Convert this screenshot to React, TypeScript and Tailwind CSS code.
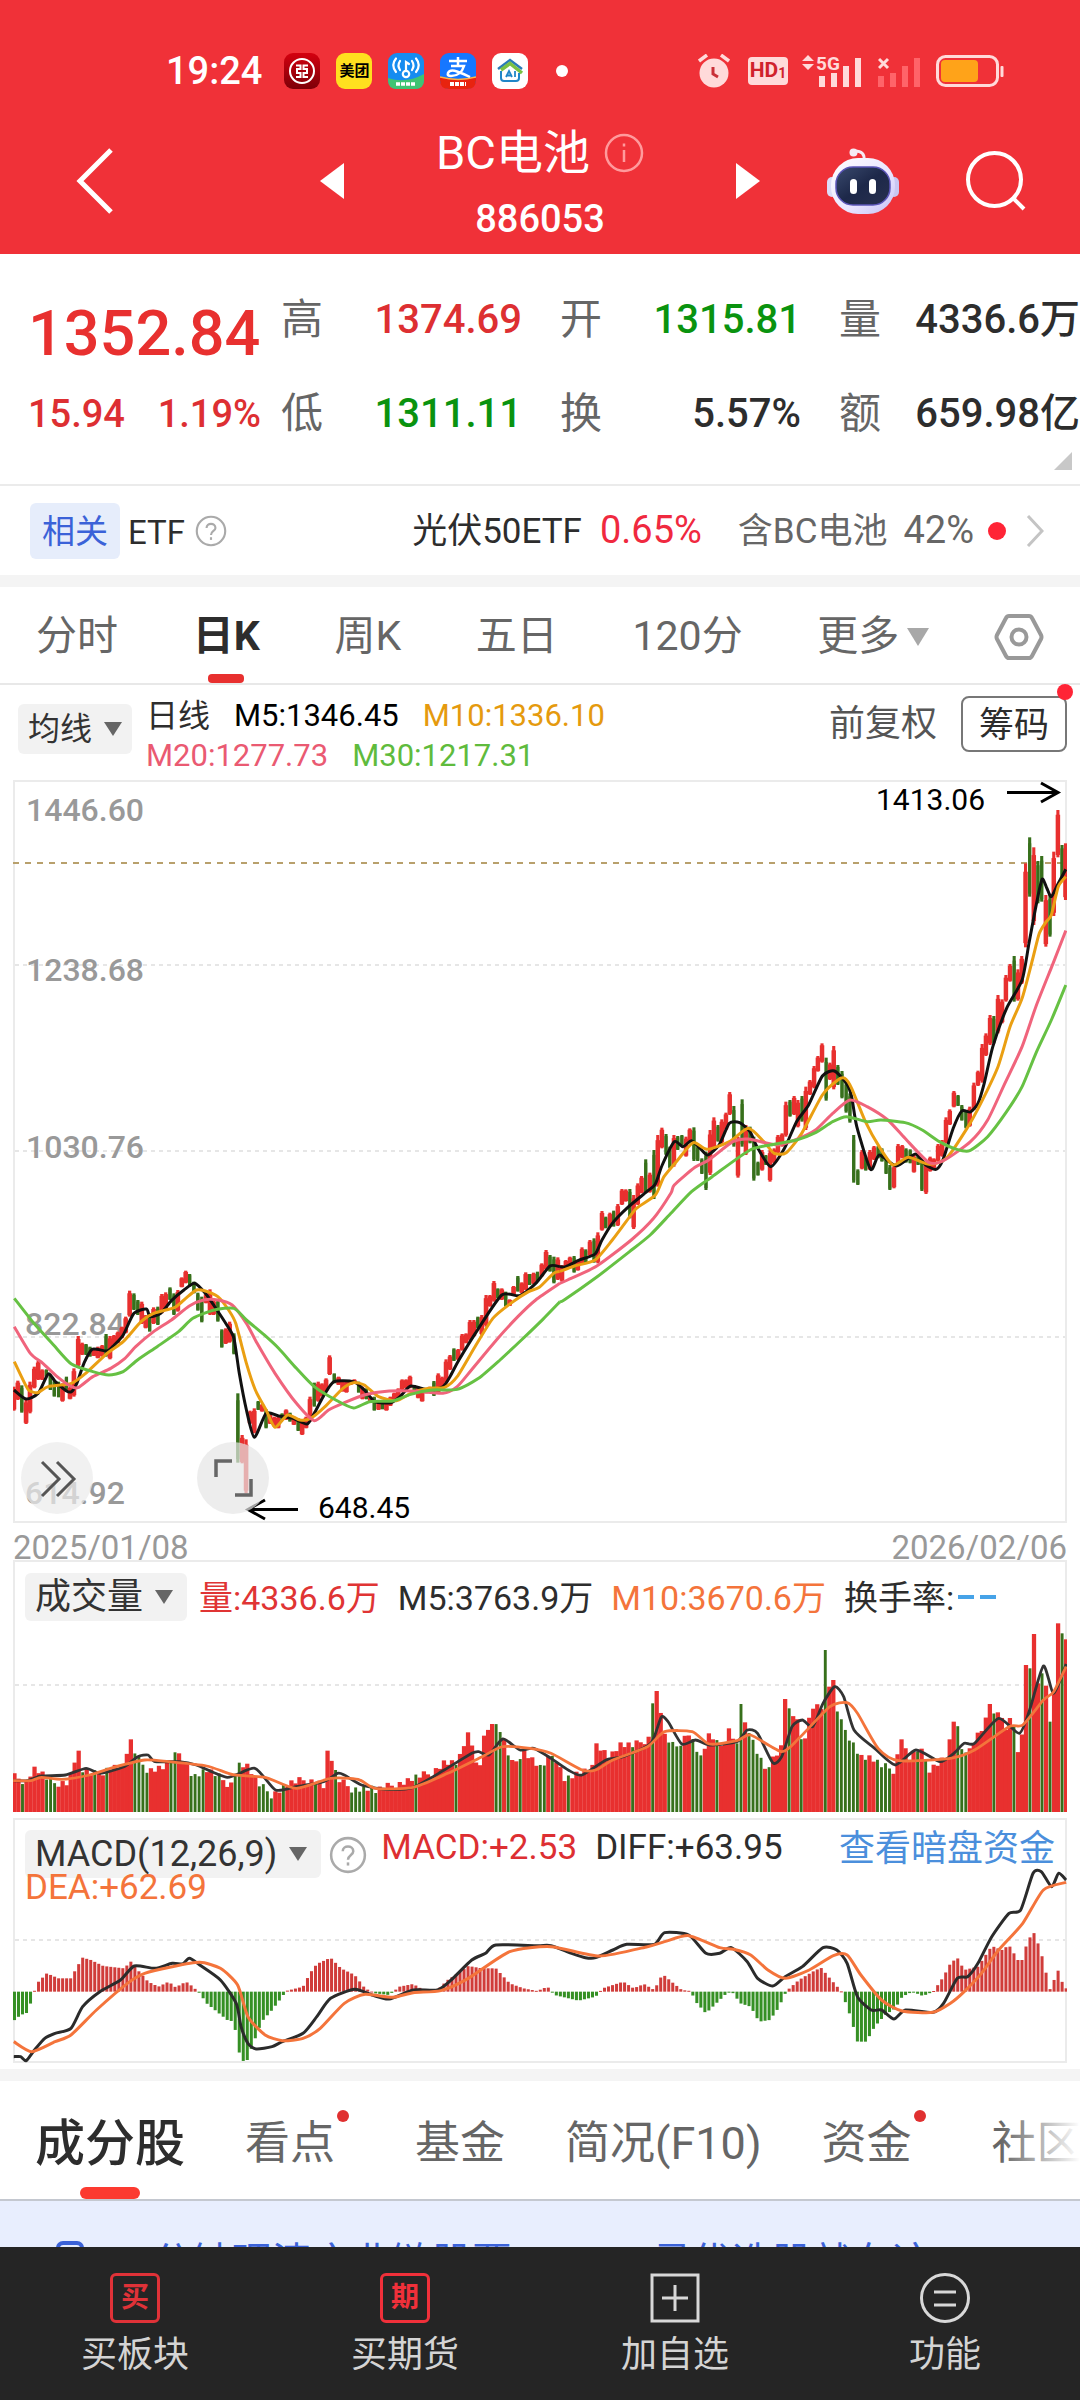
import React from "react";

type Pt = [number, number];

const parse = (s: string): Pt[] =>
  s.trim().split(/\s+/).map((p) => p.split(",").map(Number) as Pt);

/** Linear interpolation over a list of control points. */
function sample(pts: Pt[], x: number): number {
  if (x <= pts[0][0]) return pts[0][1];
  for (let i = 1; i < pts.length; i++) {
    const [x1, y1] = pts[i];
    if (x <= x1) {
      const [x0, y0] = pts[i - 1];
      return y0 + ((y1 - y0) * (x - x0)) / (x1 - x0);
    }
  }
  return pts[pts.length - 1][1];
}

/** Smooth path through the points (Catmull-Rom with a low tension). */
function curve(s: string): string {
  const p = parse(s);
  let d = `M${p[0][0]},${p[0][1]}`;
  for (let i = 0; i < p.length - 1; i++) {
    const a = p[i - 1] ?? p[i];
    const b = p[i];
    const c = p[i + 1];
    const e = p[i + 2] ?? c;
    const k = 9;
    d += `C${b[0] + (c[0] - a[0]) / k},${b[1] + (c[1] - a[1]) / k} ${c[0] - (e[0] - b[0]) / k},${c[1] - (e[1] - b[1]) / k} ${c[0]},${c[1]}`;
  }
  return d;
}

/* ---------- price data: first half and second half of the period ---------- */

const CANDLES_A =
  "r39,560,632 r50,542,600 g61,556,638 r73,600,672 r84,545,640 r96,500,565 r107,482,540 r118,508,540 g130,508,530 g141,525,570 g152,540,590 g164,545,592 r175,550,605 g186,530,575 r196,560,598 r207,505,590 r219,408,500 r230,428,465 g241,432,465 g252,440,470 r263,450,468 r274,440,475 r286,435,470 g297,402,470 r308,408,478 r319,405,435 r330,395,430 r341,380,415 r352,350,400 r363,272,350 g375,280,330 g386,300,345 r397,305,372 r408,345,385 g419,340,395 r430,322,372 g442,320,375 r453,282,340 r464,277,330 g476,262,300 g487,280,345 r498,270,335 r509,232,262 r520,212,250 g531,222,260 g543,245,280 g554,278,332 g565,290,367 r577,280,310 r588,268,345 r598,300,345 g610,300,365 g621,388,443 r632,385,432 r643,365,428 g655,400,463 g666,580,788 r678,705,790 r689,718,880 r700,632,672 r712,625,700 g723,603,630 r734,612,635 g745,628,685 r756,640,672 r768,650,680 r779,650,685 g790,640,660 r801,628,660 g812,638,665 r823,650,675 g835,655,693 r846,660,705 r857,650,685 r868,590,665 g880,548,620 r891,545,605 r902,550,590 r913,535,575 r923,466,525 g936,520,550 r948,530,555 r959,540,575 r970,545,578 r981,545,555 r992,538,552 g1004,545,578 r1015,560,598 g1026,565,598 r1037,590,605 g1048,590,632 r1060,600,630 g1071,600,628 r1082,605,632 r1093,590,618 r1104,578,602 r1115,565,600 r1126,538,570 r1137,538,565 r1148,527,565 g1160,555,575 r1171,560,595 r1182,575,605 r1193,565,580 r1204,560,578 g1215,543,588 r1227,520,580 r1238,530,570 r1249,478,550 r1260,465,510 g1271,445,483 r1283,447,480 r1294,402,452 r1305,400,430 r1316,360,422 r1327,360,410 g1338,350,385 r1349,345,405 r1361,285,380 r1372,285,320 r1383,243,305 g1394,265,295 r1405,265,300 g1416,275,320 r1427,298,318 r1438,258,285 g1450,228,275 r1461,247,280 r1472,217,270 g1483,222,255 r1494,218,252 g1505,215,245 r1517,190,230 r1529,150,210 g1540,165,215 g1551,170,250 r1562,172,240";

const CANDLES_B =
  "r64,1515,1565 r75,1500,1530 r87,1490,1520 g99,1488,1538 r110,1500,1532 r122,1462,1515 g133,1468,1512 r145,1440,1488 g157,1435,1508 r168,1417,1510 r180,1353,1412 g191,1370,1405 r203,1358,1402 g214,1352,1400 r226,1332,1398 r238,1287,1335 r249,1288,1325 g261,1287,1375 r272,1305,1407 r284,1270,1335 r295,1248,1300 g307,1198,1300 r319,1238,1298 g331,1170,1317 r342,1125,1280 r354,1103,1165 g366,1122,1185 g377,1160,1225 r389,1125,1220 g400,1128,1170 g412,1125,1155 r424,1130,1190 r435,1105,1145 g447,1102,1203 g458,1160,1203 g470,1195,1242 g482,1175,1290 r494,1110,1245 r505,1072,1170 g517,1095,1145 r528,1078,1150 r540,1058,1110 r551,996,1065 g563,1038,1160 r575,1130,1253 g587,1018,1160 r598,1095,1185 g610,1100,1150 g621,1130,1262 g633,1205,1247 r645,1170,1232 g656,1185,1215 r668,1170,1265 r680,1165,1210 r691,1125,1180 r703,1120,1160 r714,1025,1130 g726,1020,1070 r738,1008,1065 r749,1020,1102 g761,1008,1085 r772,980,1110 r784,960,1005 r796,918,985 r807,888,935 r819,850,908 g831,893,1022 r842,908,960 r853,858,988 g865,915,975 g877,933,1015 g889,965,1058 g900,1000,1088 g911,1125,1268 g923,1228,1275 r935,1170,1228 g946,1190,1232 r958,1170,1230 r970,1158,1200 g982,1158,1195 g993,1165,1205 g1005,1195,1242 g1016,1215,1290 r1028,1215,1285 r1040,1152,1215 r1052,1155,1195 g1063,1165,1208 g1075,1168,1210 r1086,1185,1238 g1098,1180,1215 g1109,1200,1293 r1121,1205,1302 r1133,1190,1235 r1144,1195,1225 r1156,1152,1205 r1168,1140,1190 r1179,1072,1150 r1190,1048,1095 r1202,993,1042 g1214,1005,1038 g1225,1035,1082 g1237,1050,1105 r1248,1040,1100 r1260,968,1050 r1272,932,978 r1284,852,968 r1295,820,888 r1307,765,855 g1318,768,850 r1330,705,820 r1342,718,790 r1353,645,725 r1365,612,665 g1377,588,725 r1388,628,722 r1399,588,672 r1410,310,562 g1422,232,410 r1434,262,495 g1446,303,430 g1457,288,425 r1469,405,560 g1481,405,530 r1492,275,468 r1504,150,292 g1516,255,355 r1526,250,420";

const LINES_A: [string, string][] = [
  ["#111111", "39,570 73,597 107,580 135,522 155,545 185,572 200,575 215,550 235,490 258,448 300,453 320,435 345,405 375,340 410,327 420,350 450,340 480,302 515,270 545,250 575,280 600,318 635,375 655,415 670,520 690,630 712,712 745,640 780,648 820,655 860,672 880,640 905,590 935,545 990,545 1020,570 1050,605 1095,608 1120,590 1150,558 1200,570 1240,560 1260,530 1285,480 1340,385 1405,285 1455,287 1500,250 1540,198 1568,200"],
  ["#ea9f12", "40,485 60,530 80,570 105,578 135,560 200,550 240,520 300,460 345,425 395,365 430,340 490,322 520,295 550,270 575,273 610,290 640,330 660,370 690,490 715,570 745,630 770,682 805,645 840,660 870,655 910,620 960,565 990,548 1020,555 1060,590 1110,602 1150,580 1200,565 1245,562 1280,530 1330,440 1380,355 1430,310 1480,275 1510,262 1550,220 1568,214"],
  ["#f0647c", "40,380 85,460 120,490 160,530 200,560 220,562 260,530 310,505 350,475 380,440 430,395 480,360 530,318 570,300 610,300 650,315 690,370 720,430 770,520 830,610 880,662 920,630 960,610 1020,585 1090,573 1160,573 1240,580 1280,560 1320,510 1390,420 1450,350 1500,300 1568,250"],
  ["#66c143", "40,295 95,370 150,435 200,492 260,515 305,525 345,515 385,480 440,440 500,395 540,355 600,330 655,325 690,360 740,405 780,445 830,505 880,560 940,600 990,624 1035,605 1100,603 1150,583 1210,570 1280,568 1340,535 1400,480 1460,420 1520,358 1568,305"],
];

const LINES_B: [string, string][] = [
  ["#111111", "58,1520 75,1520 115,1500 160,1482 180,1440 210,1390 255,1342 310,1295 335,1272 355,1215 390,1145 415,1160 440,1142 465,1165 487,1185 520,1155 550,1090 580,1088 610,1115 630,1160 670,1220 710,1165 745,1085 780,1035 820,948 855,933 890,970 905,1010 920,1100 960,1228 985,1185 1035,1218 1090,1182 1120,1215 1150,1228 1170,1200 1200,1105 1225,1053 1250,1056 1272,1030 1290,970 1315,860 1355,745 1400,660 1420,550 1440,440 1458,358 1472,385 1485,410 1505,370 1527,328"],
  ["#ea9f12", "58,1534 100,1518 160,1500 210,1440 250,1385 280,1345 335,1305 360,1250 400,1200 445,1148 485,1168 550,1145 605,1105 650,1145 680,1180 715,1178 760,1120 820,1005 865,960 885,955 905,985 945,1085 985,1160 1025,1215 1070,1192 1130,1213 1180,1195 1240,1105 1280,1030 1330,920 1365,800 1400,715 1430,600 1450,520 1470,485 1485,465 1505,380 1527,350"],
  ["#f0647c", "58,1570 80,1560 165,1518 265,1440 330,1375 380,1300 390,1275 450,1222 490,1200 560,1145 605,1137 690,1155 745,1138 800,1110 850,1060 900,1020 950,1040 1010,1080 1060,1135 1130,1208 1175,1200 1250,1145 1300,1080 1350,970 1400,860 1440,740 1490,610 1527,512"],
  ["#66c143", "58,1625 70,1620 160,1555 260,1475 320,1425 380,1360 440,1295 500,1250 610,1170 680,1153 745,1140 800,1118 850,1085 890,1070 950,1085 990,1080 1060,1088 1110,1110 1160,1145 1210,1168 1248,1172 1300,1130 1355,1055 1400,980 1440,880 1485,780 1527,675"],
];

function Half({ candles, lines, transform }: { candles: string; lines: [string, string][]; transform: string }) {
  return (
    <g transform={transform}>
      {candles.split(" ").map((c) => {
        const [x, top, bottom] = c.slice(1).split(",").map(Number);
        const up = c[0] === "r";
        const w = up ? 13 : 9;
        const h = bottom - top;
        return (
          <g key={x} fill={up ? "#e8302f" : "#37701b"}>
            <rect x={x - w / 2} y={top + h * 0.1} width={w} height={h * 0.85} />
            <rect x={x - 4.5} y={top} width={9} height={h} />
          </g>
        );
      })}
      {lines.map(([color, pts]) => (
        <path key={color} d={curve(pts)} fill="none" stroke={color} strokeWidth="3" vectorEffect="non-scaling-stroke" strokeLinejoin="round" />
      ))}
    </g>
  );
}

function PriceChart() {
  return (
    <svg viewBox="0 0 1054 743" className="block w-full" role="img" aria-label="日K">
      <rect x="1" y="1" width="1052" height="741" fill="none" stroke="#ebebeb" strokeWidth="2" />
      {[185, 371, 557].map((y) => (
        <line key={y} x1="2" x2="1052" y1={y} y2={y} stroke="#e6e6e6" strokeWidth="2" strokeDasharray="4 4" />
      ))}
      <line x1="0" x2="1054" y1="83" y2="83" stroke="#b8a06c" strokeWidth="2" strokeDasharray="6 6" />
      <g fill="#999999" fontSize="32" fontFamily="Roboto, sans-serif" fontWeight="500">
        <text x="13" y="41">1446.60</text>
        <text x="13" y="201">1238.68</text>
        <text x="13" y="378">1030.76</text>
        <text x="12" y="555">822.84</text>
        <text x="12" y="724">614.92</text>
      </g>
      <Half candles={CANDLES_A} lines={LINES_A} transform="translate(-13 420) scale(0.35714 0.33333)" />
      <Half candles={CANDLES_B} lines={LINES_B} transform="translate(527 -20) scale(0.34435 0.33333)" />
      <g fill="#000" fontSize="30" fontFamily="Roboto, sans-serif">
        <text x="863" y="30">1413.06</text>
        <text x="305" y="738">648.45</text>
      </g>
      <g stroke="#000" strokeWidth="3" fill="none">
        <path d="M994 12.500H1044M1028 3L1045 12.500L1028 22" />
        <path d="M285 729.500H236M252 720L235 729.500L252 739" />
      </g>
      <g>
        <circle cx="44" cy="698" r="36" fill="#ebebeb" fillOpacity="0.7" />
        <path d="M29 682L46 699L29 716M44 682L61 699L44 716" fill="none" stroke="#555" strokeWidth="3" />
        <circle cx="220" cy="698" r="36" fill="#e6e6e6" fillOpacity="0.7" />
        <path d="M219 681H203V697M222 715H238V699" fill="none" stroke="#666" strokeWidth="3.500" />
      </g>
    </svg>
  );
}

/* ---------- volume ---------- */

const VOLUME = parse(
  "19,712 40,725 48,680 60,700 75,730 90,725 100,725 112,632 118,690 140,705 160,680 180,680 188,598 200,660 215,690 240,680 258,640 270,660 280,710 300,690 320,715 335,735 345,668 360,680 375,735 395,765 415,735 440,720 460,720 472,740 478,632 490,720 510,745 540,745 545,755 580,730 600,715 625,700 645,665 665,670 680,577 690,650 700,690 705,587 716,552 728,575 735,630 745,680 760,630 785,685 805,640 820,715 840,700 860,690 868,610 885,650 900,615 920,620 945,590 950,490 955,453 965,590 980,625 1000,575 1018,655 1030,580 1045,625 1060,565 1072,625 1077,492 1083,547 1095,620 1110,690 1120,660 1135,620 1141,477 1147,505 1160,560 1165,615 1180,495 1195,500 1199,330 1205,440 1211,420 1217,535 1235,595 1250,650 1265,655 1280,680 1298,690 1309,598 1320,660 1335,625 1350,685 1375,645 1385,545 1391,570 1400,660 1415,595 1430,550 1437,492 1445,540 1449,517 1460,570 1470,535 1478,625 1485,580 1490,375 1496,385 1501,282 1507,430 1513,400 1519,437 1525,545 1531,450 1536,250 1542,280 1548,298",
);
const PEAKS = [48, 112, 188, 258, 345, 478, 680, 705, 716, 868, 950, 955, 1030, 1060, 1077, 1083, 1141, 1147, 1199, 1205, 1211, 1309, 1385, 1437, 1449, 1490, 1496, 1501, 1507, 1513, 1519, 1525, 1531, 1536, 1542, 1548];
const DOWN: Pt[] = parse(
  "28,34 64,82 120,124 135,140 152,156 193,218 232,236 245,254 275,300 308,318 338,348 372,398 410,414 456,460 484,492 510,530 540,546 604,608 658,662 692,696 720,726 734,738 754,758 780,790 800,806 824,828 844,848 917,921 937,941 948,952 968,990 1004,1022 1040,1044 1068,1079 1088,1106 1112,1118 1145,1149 1163,1167 1197,1201 1215,1245 1256,1261 1272,1294 1328,1332 1343,1347 1389,1406 1441,1445 1470,1474 1494,1498 1511,1515 1523,1527 1540,1544",
);

const N = 263;
const STEP = (1548 - 21) / (N - 1);

function VolumeChart() {
  const bars = Array.from({ length: N }, (_, i) => {
    const x = 21 + i * STEP;
    const peak = PEAKS.find((p) => Math.abs(p - x) <= STEP / 2);
    const noise = (((i * 7919) % 31) - 15) * 0.9;
    const y = peak !== undefined ? sample(VOLUME, peak) : sample(VOLUME, x) + noise;
    return { x, y, down: DOWN.some(([a, b]) => x >= a - 0.5 && x <= b + 0.5) };
  });
  return (
    <svg viewBox="0 0 1054 252" className="block w-full" role="img" aria-label="成交量">
      <path d="M1 252V1H1053V252" fill="none" stroke="#ebebeb" strokeWidth="2" />
      <line x1="2" x2="1052" y1="125" y2="125" stroke="#e6e6e6" strokeWidth="2" strokeDasharray="4 4" />
      <g transform="translate(-13 -20) scale(0.68871 0.33333)">
        {bars.map((b) => (
          <rect key={b.x} x={b.x - (b.down ? 2.1 : 3.1)} y={b.y} width={b.down ? 4.2 : 6.2} height={816 - b.y} fill={b.down ? "#37701b" : "#e8302f"} />
        ))}
        <path
          d={curve("19,722 40,722 60,708 95,705 125,685 145,700 180,680 200,650 215,645 225,665 260,665 285,675 330,712 370,685 400,750 430,740 470,725 490,700 500,705 525,735 560,748 600,742 645,690 685,640 695,635 710,645 730,597 755,630 775,625 800,655 825,690 845,705 880,660 905,650 945,610 960,532 970,545 990,612 1010,600 1030,615 1070,605 1085,570 1100,580 1122,668 1135,650 1150,560 1165,540 1180,560 1195,490 1212,440 1225,470 1240,570 1270,625 1300,675 1330,630 1365,665 1385,640 1400,610 1415,610 1450,535 1480,580 1495,510 1515,378 1530,460 1548,372")}
          fill="none" stroke="#333" strokeWidth="2.8" vectorEffect="non-scaling-stroke"
        />
        <path
          d={curve("19,722 45,722 60,712 90,718 130,705 165,682 210,660 245,665 300,678 340,705 385,712 430,745 480,715 520,718 545,745 600,742 650,700 700,650 730,620 770,625 800,640 845,690 865,690 890,660 940,620 965,575 1005,575 1030,612 1070,602 1090,585 1135,635 1160,595 1205,500 1230,488 1245,520 1275,625 1305,662 1380,655 1415,630 1465,560 1485,555 1515,480 1530,455 1548,380")}
          fill="none" stroke="#f4743b" strokeWidth="2.8" vectorEffect="non-scaling-stroke"
        />
      </g>
    </svg>
  );
}

/* ---------- MACD ---------- */

const HIST = parse(
  "20,632 30,615 40,608 46,570 50,543 56,515 68,490 85,505 103,505 112,470 120,443 132,450 150,468 180,475 190,455 200,480 215,515 230,530 245,515 255,532 270,515 280,530 290,550 300,580 315,605 330,630 340,635 345,715 352,752 358,756 366,710 380,635 395,600 410,560 415,543 440,530 450,490 460,462 480,443 495,475 515,495 530,535 545,550 565,555 580,530 600,522 615,540 635,540 650,510 665,490 680,468 700,475 720,475 740,520 760,535 780,543 795,530 805,555 840,572 865,560 875,535 905,515 920,535 935,522 950,540 962,492 975,515 990,540 1003,543 1010,575 1025,610 1040,580 1055,550 1062,543 1075,580 1090,590 1102,635 1118,630 1130,595 1142,543 1160,510 1180,485 1192,473 1205,505 1222,545 1235,620 1245,695 1258,695 1270,650 1285,615 1300,595 1310,560 1325,545 1340,558 1355,545 1370,500 1380,460 1390,443 1400,480 1420,470 1440,408 1455,420 1465,405 1478,450 1485,450 1492,390 1502,368 1512,430 1525,540 1536,480 1542,515 1548,535",
);

function MacdChart() {
  return (
    <svg viewBox="0 0 1054 245" className="block w-full" role="img" aria-label="MACD">
      <rect x="1" y="1" width="1052" height="243" fill="none" stroke="#ebebeb" strokeWidth="2" />
      <line x1="2" x2="1052" y1="122" y2="122" stroke="#e6e6e6" strokeWidth="2" strokeDasharray="4 4" />
      <g transform="translate(-13 -8) scale(0.68871 0.33333)">
        {Array.from({ length: N }, (_, i) => {
          const x = 21 + i * STEP;
          const y = sample(HIST, x);
          const up = y < 545;
          return <rect key={i} x={x - 2.2} y={up ? y : 545} width="4.4" height={Math.max(3, Math.abs(y - 545))} fill={up ? "#d03c3a" : "#359024"} />;
        })}
        <path
          d={curve("20,740 30,740 38,752 50,720 65,685 80,670 103,655 120,590 145,545 175,510 195,468 225,475 250,460 265,462 275,445 290,465 320,510 343,580 350,650 360,700 372,717 395,710 410,695 440,670 460,620 480,565 515,538 540,555 565,567 600,540 635,540 655,510 685,450 705,430 720,405 780,407 800,407 830,430 850,443 865,443 890,420 910,403 950,403 965,368 1000,375 1025,430 1045,430 1062,413 1085,455 1100,505 1122,528 1140,500 1165,470 1195,413 1215,420 1230,460 1245,560 1265,600 1280,600 1298,627 1315,600 1355,607 1370,580 1390,505 1405,500 1420,460 1440,380 1465,310 1482,300 1500,190 1512,185 1527,230 1537,190 1548,210")}
          fill="none" stroke="#2b2b2b" strokeWidth="3" vectorEffect="non-scaling-stroke"
        />
        <path
          d={curve("20,695 46,725 80,695 103,675 140,600 185,520 210,490 250,470 290,457 320,475 345,525 360,620 385,675 410,692 440,685 465,655 500,580 530,553 570,562 600,548 640,542 680,505 740,425 800,410 870,438 940,410 965,395 1000,377 1045,413 1065,418 1090,435 1115,480 1140,505 1175,480 1210,437 1230,435 1250,495 1280,570 1310,603 1355,607 1380,580 1400,545 1425,490 1450,420 1485,340 1515,240 1548,217")}
          fill="none" stroke="#f4743b" strokeWidth="3" vectorEffect="non-scaling-stroke"
        />
      </g>
    </svg>
  );
}

/* ---------- small pieces ---------- */

function Caret({ className = "" }: { className?: string }) {
  return (
    <svg viewBox="0 0 18 14" className={"w-[18px] shrink-0 " + className} aria-hidden="true">
      <path d="M0 0H18L9 14Z" fill="currentColor" />
    </svg>
  );
}

function Help({ className = "" }: { className?: string }) {
  return (
    <svg viewBox="0 0 36 36" className={"shrink-0 " + className} fill="none" stroke="#aaaaaa" strokeWidth="2.400" aria-hidden="true">
      <circle cx="18" cy="18" r="16" />
      <path d="M13 14.500C13 8.500 23 8.500 23 14.500C23 18 18 18 18 22.500" />
      <path d="M18 25V28" />
    </svg>
  );
}

function StatusBar() {
  return (
    <div className="flex items-center justify-between pl-[166px] pr-[76px]">
      <div className="flex items-center">
        <span className="text-[38px] leading-12 font-medium">19:24</span>
        <div className="ml-[22px] flex items-center gap-4">
          <svg viewBox="0 0 36 36" className="size-9">
            <defs>
              <linearGradient id="bank" x2="0" y2="1">
                <stop stopColor="#d4000f" />
                <stop offset="1" stopColor="#7d0008" />
              </linearGradient>
            </defs>
            <rect width="36" height="36" rx="9" fill="url(#bank)" />
            <g fill="none" stroke="#fff" strokeWidth="2">
              <circle cx="18" cy="18" r="12" />
              <path d="M12 12.500H16.500V16H13V20H16.500V24H12M24 12.500H19.500V16H23V20H19.500V24H24" />
            </g>
          </svg>
          <span className="flex size-9 items-center justify-center rounded-[9px] bg-[#ffe01f] text-[15px] leading-none font-bold whitespace-nowrap text-black">美团</span>
          <svg viewBox="0 0 36 36" className="size-9">
            <rect width="36" height="36" rx="9" fill="#168cf0" />
            <path d="M0 25Q18 31 36 21V27Q36 36 27 36H9Q0 36 0 27Z" fill="#3fc473" />
            <g fill="none" stroke="#fff" strokeWidth="2.200" strokeLinecap="round">
              <circle cx="18" cy="21" r="3.200" />
              <path d="M18 18V9L21 11M12 8Q9 12.500 12 17M8 5.500Q2.500 12 8 19M24 8Q27 12.500 24 17M28 5.500Q33.500 12 28 19" />
            </g>
            <path d="M8 31H28" stroke="#fff" strokeWidth="3.500" strokeDasharray="4 1" />
          </svg>
          <svg viewBox="0 0 36 36" className="size-9">
            <rect width="36" height="36" rx="9" fill="#1677ff" />
            <path d="M0 24Q18 29 36 24V27Q36 36 27 36H9Q0 36 0 27Z" fill="#e8230f" />
            <path d="M0 24Q18 29 36 24" fill="none" stroke="#ffb347" strokeWidth="1.500" />
            <path d="M10 31H26" stroke="#fff" strokeWidth="4" strokeDasharray="4 1" />
            <path d="M9 8H27M18 4V12M11 13H24Q21 23 11 23Q7 23 8 20Q10 16 17 18.500T30 24" fill="none" stroke="#fff" strokeWidth="2.500" />
          </svg>
          <svg viewBox="0 0 36 36" className="size-9" fill="none">
            <rect width="36" height="36" rx="9" fill="#fff" />
            <path d="M6 16L18 7L30 16" stroke="#2a7ab8" strokeWidth="2.500" />
            <path d="M9 17L18 10.500L30 20" stroke="#7ac143" strokeWidth="3.500" />
            <path d="M9 18V25Q9 28 12 28H24Q27 28 27 25V20" stroke="#1f86c8" strokeWidth="2" />
            <path d="M14 24L17 18L20 24M15 22.500H19M23 18V24" stroke="#1f86c8" strokeWidth="1.800" />
          </svg>
        </div>
        <span className="ml-7 size-3 rounded-full bg-white" />
      </div>
      <div className="flex items-center">
        <svg viewBox="0 0 32 34" className="h-[34px] w-8">
          <circle cx="16" cy="19" r="14.500" fill="#ffdada" />
          <path d="M1 7L9 1M31 7L23 1" stroke="#ffdada" strokeWidth="3.500" />
          <path d="M15 13V20L20 23" stroke="#c93038" strokeWidth="3" fill="none" />
        </svg>
        <span className="ml-[18px] flex h-7 w-10 items-center justify-center rounded bg-[#ffdada] text-[21px] font-bold text-[#d0222c]">
          HD<span className="self-end text-[14px] leading-6">1</span>
        </span>
        <svg viewBox="0 0 62 34" className="ml-3.5 h-[34px] w-[62px]" fill="#ffdada">
          <path d="M0 7L6 1L12 7ZM0 10L6 16L12 10Z" />
          <rect x="17" y="22" width="6" height="11" />
          <rect x="29" y="19" width="6" height="14" />
          <rect x="41" y="12" width="6" height="21" />
          <rect x="53" y="4" width="6" height="29" />
          <text x="14" y="16" fontSize="19" fontWeight="700" fontFamily="Roboto, sans-serif">5G</text>
        </svg>
        <svg viewBox="0 0 44 34" className="ml-3.5 h-[34px] w-11">
          <g fill="#ff6469">
            <rect x="0" y="22" width="6" height="11" />
            <rect x="12" y="19" width="6" height="14" />
            <rect x="24" y="12" width="6" height="21" />
            <rect x="36" y="4" width="6" height="29" />
          </g>
          <path d="M1 5L10 14M10 5L1 14" stroke="#ffdada" strokeWidth="3" />
        </svg>
        <svg viewBox="0 0 68 32" className="ml-3.5 h-8 w-[68px]">
          <rect x="1.500" y="1.500" width="60" height="29" rx="8" fill="none" stroke="#ffdada" strokeWidth="3" />
          <rect x="5" y="5" width="37" height="22" rx="4" fill="#ffa319" />
          <rect x="64.500" y="11" width="3" height="11" rx="1" fill="#ffdada" />
        </svg>
      </div>
    </div>
  );
}

function Robot() {
  return (
    <svg viewBox="0 0 72 66" className="w-[72px]" aria-hidden="true">
      <defs>
        <linearGradient id="shell" x2="1" y2="1">
          <stop stopColor="#ffffff" />
          <stop offset="0.6" stopColor="#e9e4ff" />
          <stop offset="1" stopColor="#c3c0f5" />
        </linearGradient>
        <linearGradient id="visor" x2="1" y2="1">
          <stop stopColor="#3a4a6e" />
          <stop offset="0.5" stopColor="#1d2849" />
          <stop offset="1" stopColor="#28304f" />
        </linearGradient>
      </defs>
      <circle cx="26.500" cy="4.500" r="4" fill="#f6eaf4" />
      <path d="M28 3Q38 3 37 12" fill="none" stroke="#f6eaf4" strokeWidth="3" />
      <rect x="0" y="29" width="10" height="20" rx="5" fill="#dcdcf8" />
      <rect x="62" y="29" width="10" height="20" rx="5" fill="#c9c6f2" />
      <rect x="4" y="10" width="64" height="56" rx="27" fill="url(#shell)" />
      <rect x="9" y="19" width="54" height="38" rx="17" fill="url(#visor)" stroke="#5b55b8" strokeWidth="1.500" />
      <rect x="23" y="31" width="7" height="15" rx="3.500" fill="#fff" />
      <rect x="42" y="31" width="7" height="15" rx="3.500" fill="#fff" />
    </svg>
  );
}

const QUOTES: [string, string, string][] = [
  ["高", "1374.69", "text-[#dd2f32]"],
  ["开", "1315.81", "text-[#0a930f]"],
  ["量", "4336.6万", "text-[#2d2d2d]"],
  ["低", "1311.11", "text-[#0a930f]"],
  ["换", "5.57%", "text-[#2d2d2d]"],
  ["额", "659.98亿", "text-[#2d2d2d]"],
];

const DETAIL_TABS: { name: string; dot?: boolean }[] = [
  { name: "看点", dot: true },
  { name: "基金" },
  { name: "简况(F10)" },
  { name: "资金", dot: true },
  { name: "社区" },
];

export default function App() {
  return (
    <div className="flex min-h-screen flex-col overflow-x-hidden bg-white font-[Roboto,'Noto_Sans_CJK_SC',sans-serif] text-[#2d2d2d]">
      <header className="bg-[#f03138] pt-[47px] text-white">
        <StatusBar />
        <div className="mt-6 grid h-[135px] grid-cols-[1fr_auto_1fr]">
          <div className="flex items-center justify-between pr-[92px] pb-3 pl-[76px]">
            <button aria-label="返回">
              <svg viewBox="0 0 38 66" className="w-[38px]" fill="none" stroke="#fff" strokeWidth="5">
                <path d="M35 2L4 33L35 64" />
              </svg>
            </button>
            <button aria-label="上一个">
              <svg viewBox="0 0 24 36" className="w-6" fill="#fff">
                <path d="M24 0V36L0 18Z" />
              </svg>
            </button>
          </div>
          <div className="flex flex-col items-center">
            <div className="flex items-center gap-3.5">
              <h1 className="text-[47px] leading-[68px]">BC电池</h1>
              <svg viewBox="0 0 40 40" className="w-10" fill="none" stroke="#ff9a9c" strokeWidth="2.500">
                <circle cx="20" cy="20" r="18" />
                <path d="M20 17V29M20 10.500V13.500" />
              </svg>
            </div>
            <span className="text-[38px] leading-[64px] font-medium">886053</span>
          </div>
          <div className="flex items-center justify-between pr-[54px] pb-3 pl-[92px]">
            <button aria-label="下一个">
              <svg viewBox="0 0 24 36" className="w-6" fill="#fff">
                <path d="M0 0V36L24 18Z" />
              </svg>
            </button>
            <button aria-label="智能助手">
              <Robot />
            </button>
            <button aria-label="搜索">
              <svg viewBox="0 0 60 60" className="w-[60px]" fill="none" stroke="#fff" strokeWidth="4">
                <circle cx="28.500" cy="28.500" r="26.500" />
                <path d="M47 47L58 58" />
              </svg>
            </button>
          </div>
        </div>
      </header>

      <section className="relative flex border-b-2 border-[#ebebeb] pb-[46px]">
        <div className="w-[281px] shrink-0 pt-12 pr-5 pl-7 text-[#dd2f32]">
          <div className="text-[63px] leading-16 font-medium whitespace-nowrap text-[#e8302f]">1352.84</div>
          <div className="mt-6 flex justify-between text-[38px] leading-12 font-medium">
            <span>15.94</span>
            <span>1.19%</span>
          </div>
        </div>
        <dl className="grid flex-1 grid-cols-3 gap-x-[38px] gap-y-[46px] pt-[42px] text-[40px] leading-12">
          {QUOTES.map(([label, value, color]) => (
            <div key={label} className="flex justify-between whitespace-nowrap">
              <dt className="text-[42px] text-[#666]">{label}</dt>
              <dd className={"font-medium " + color}>{value}</dd>
            </div>
          ))}
        </dl>
        <svg viewBox="0 0 18 18" className="absolute right-2 bottom-3.5 w-[18px]">
          <path d="M18 0V18H0Z" fill="#c8c8c8" />
        </svg>
      </section>

      <section className="flex h-[89px] items-center justify-between pr-9 pl-[30px] whitespace-nowrap">
        <div className="flex items-center">
          <span className="rounded-md bg-[#e6edfb] px-3 pt-0.5 text-[33px] leading-[54px] text-[#3b62d8]">相关</span>
          <span className="ml-2 pt-1 text-[33px]">ETF</span>
          <Help className="ml-2.5 w-8" />
        </div>
        <a href="#etf" className="flex items-center">
          <span className="pt-1 text-[35px]">光伏50ETF</span>
          <span className="ml-[18px] text-[38px] text-[#f0293f]">0.65%</span>
          <span className="ml-9 pt-1 text-[35px] text-[#666]">含BC电池</span>
          <span className="ml-4 text-[38px] text-[#666]">42%</span>
          <span className="ml-3.5 size-[18px] rounded-full bg-[#ff2436]" />
          <svg viewBox="0 0 18 32" className="ml-5 w-[18px]" fill="none" stroke="#c4c4c4" strokeWidth="3">
            <path d="M2 1L16 16L2 31" />
          </svg>
        </a>
      </section>

      <div className="h-3 bg-[#f4f4f4]" />

      <nav className="flex h-[98px] items-center justify-between border-b-2 border-[#e8e8e8] px-9 pt-1 text-[41px] text-[#666]">
        <button>分时</button>
        <button className="relative flex h-full items-center font-bold text-[#2d2d2d]">
          日K
          <span className="absolute bottom-0 left-1/2 h-[9px] w-9 -translate-x-1/2 rounded bg-[#e8302f]" />
        </button>
        <button>周K</button>
        <button>五日</button>
        <button>120分</button>
        <button className="flex items-center gap-2">
          更多
          <svg viewBox="0 0 22 18" className="w-[22px]" fill="#a8a8a8">
            <path d="M0 0H22L11 18Z" />
          </svg>
        </button>
        <button aria-label="设置" className="-ml-2.5">
          <svg viewBox="0 0 50 48" className="w-[50px]" fill="none" stroke="#999" strokeWidth="4">
            <path d="M15 3H35Q37 3 38 5L47 22Q48 24 47 26L38 43Q37 45 35 45H15Q13 45 12 43L3 26Q2 24 3 22L12 5Q13 3 15 3Z" />
            <circle cx="25" cy="24" r="7.500" />
          </svg>
        </button>
      </nav>

      <section className="flex items-start px-[13px] pt-[11px] pb-1 whitespace-nowrap">
        <button className="mt-2 ml-[5px] flex h-[50px] items-center gap-3 rounded-md bg-[#f2f2f2] px-2.5 text-[32px] text-[#333]">
          均线
          <Caret className="text-[#666]" />
        </button>
        <div className="ml-3.5 text-[30px] leading-10">
          <div className="flex gap-6">
            <span className="text-[32px]">日线</span>
            <span className="text-[31px] text-black">M5:1346.45</span>
            <span className="text-[31px] text-[#e59a0e]">M10:1336.10</span>
          </div>
          <div className="flex gap-6 text-[31px]">
            <span className="text-[#ea5a72]">M20:1277.73</span>
            <span className="text-[#5fbb3d]">M30:1217.31</span>
          </div>
        </div>
        <span className="ml-auto text-[36px] leading-14 text-[#555]">前复权</span>
        <button className="relative ml-6 h-14 rounded-lg border-2 border-[#777] px-4 pt-0.5 text-[35px] leading-none">
          筹码
          <span className="absolute -top-3.5 -right-2 size-4 rounded-full bg-[#ff2436]" />
        </button>
      </section>

      <section className="px-[13px]">
        <PriceChart />
        <div className="flex h-[37px] justify-between text-[33px] leading-[50px] text-[#999]">
          <span>2025/01/08</span>
          <span>2026/02/06</span>
        </div>

        <div className="relative">
          <VolumeChart />
          <div className="absolute top-0 right-0 left-0 flex items-center pt-3 pl-3 text-[34px] leading-12 whitespace-nowrap">
            <button className="flex items-center gap-3 rounded-md bg-[#f2f2f2] pr-3.5 pl-2.5 text-[36px] text-[#333]">
              成交量
              <Caret className="text-[#666]" />
            </button>
            <span className="ml-3 pt-0.5 text-[#e03434]">量:4336.6万</span>
            <span className="ml-[18px] pt-0.5">M5:3763.9万</span>
            <span className="ml-[18px] pt-0.5 text-[#f4743b]">M10:3670.6万</span>
            <span className="ml-[18px] pt-0.5">换手率:</span>
            <svg viewBox="0 0 40 4" className="ml-1 w-10" fill="#46a3e8">
              <path d="M0 0H16V4H0ZM22 0H38V4H22Z" />
            </svg>
          </div>
        </div>

        <div className="relative mt-[6px]">
          <MacdChart />
          <div className="absolute top-0 right-0 left-0 px-3 text-[35px] whitespace-nowrap">
            <div className="flex items-start pt-3">
              <button className="flex h-12 items-center gap-3 rounded-md bg-[#f2f2f2] pr-3.5 pl-2.5 text-[36px] text-[#333]">
                MACD(12,26,9)
                <Caret className="text-[#666]" />
              </button>
              <Help className="mt-1.5 ml-2 w-[38px]" />
              <span className="ml-3.5 leading-9 text-[#dd2f32]">MACD:+2.53</span>
              <span className="ml-[18px] leading-9">DIFF:+63.95</span>
              <a href="#flow" className="ml-auto text-[36px] leading-[38px] text-[#4b8fdc]">查看暗盘资金</a>
            </div>
            <div className="leading-5 text-[#f4743b]">DEA:+62.69</div>
          </div>
        </div>
      </section>

      <div className="mt-1.5 h-3 bg-[#f4f4f4]" />

      <nav className="relative flex h-[120px] items-center gap-15 overflow-hidden border-b-2 border-[#c4c8d0] pt-2 pl-[35px] text-[45px] whitespace-nowrap text-[#666]">
        <button className="relative flex h-full items-center text-[50px] font-medium text-[#2d2d2d]">
          成分股
          <span className="absolute bottom-0 left-1/2 h-3 w-15 -translate-x-1/2 rounded-md bg-[#fc3a30]" />
        </button>
        {DETAIL_TABS.map((t) => (
          <button key={t.name} className={t.dot ? "relative pr-5" : "relative"}>
            {t.name}
            {t.dot && <span className="absolute top-0 right-1.5 size-3 rounded-full bg-[#e03030]" />}
          </button>
        ))}
        <span className="absolute top-0 right-0 h-full w-20 bg-linear-to-l from-white to-transparent" />
      </nav>

      <a href="#chain" className="flex h-[46px] items-start overflow-hidden bg-[#e8eefe] pt-8 pl-14 text-[40px] leading-15 whitespace-nowrap text-[#3b62d8]">
        <svg viewBox="0 0 28 36" className="mt-2 w-7 shrink-0" fill="none" stroke="#3b62d8" strokeWidth="4">
          <rect x="2" y="2" width="24" height="32" rx="5" />
        </svg>
        <span className="ml-7">一分钟理清产业链股票</span>
        <span className="ml-35">寻优选股就在这</span>
      </a>

      <nav className="grid flex-1 grid-cols-4 bg-[#252525] pt-[26px] text-[36px] leading-12 text-[#d4d4d4]">
        <button className="flex flex-col items-center gap-2">
          <span className="flex size-[50px] items-center justify-center rounded-md border-[3px] border-[#e03238] text-[28px] leading-none font-bold text-[#e03238]">买</span>
          买板块
        </button>
        <button className="flex flex-col items-center gap-2">
          <span className="flex size-[50px] items-center justify-center rounded-md border-[3px] border-[#f0303a] text-[28px] leading-none font-bold text-[#f0303a]">期</span>
          买期货
        </button>
        <button className="flex flex-col items-center gap-2">
          <svg viewBox="0 0 50 50" className="w-[50px]" fill="none" stroke="#d8d8d8" strokeWidth="3">
            <path d="M2 2H48V48H2ZM25 12V38M12 25H38" />
          </svg>
          加自选
        </button>
        <button className="flex flex-col items-center gap-2">
          <svg viewBox="0 0 50 50" className="w-[50px]" fill="none" stroke="#d8d8d8" strokeWidth="3">
            <circle cx="25" cy="25" r="23.500" />
            <path d="M14 19H36M14 32H36" />
          </svg>
          功能
        </button>
      </nav>
    </div>
  );
}
